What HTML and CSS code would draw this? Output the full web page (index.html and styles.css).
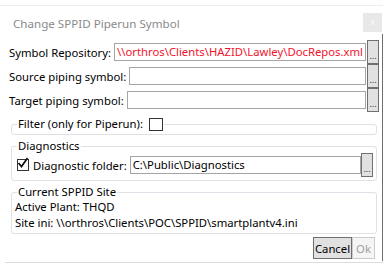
FILE: index.html
```html
<!DOCTYPE html>
<html lang="en">
<head>
    <meta charset="UTF-8">
    <title>Change SPPID Piperun Symbol</title>
    <link rel="stylesheet" href="styles.css">
</head>
<body>
    <div class="dialog">
        <div class="titlebar">
            <span class="title">Change SPPID Piperun Symbol</span>
            <span class="close">x</span>
        </div>

        <div class="panel">
            <div class="row">
                <label>Symbol Repository:</label>
                <div class="field red">\\orthros\Clients\HAZID\Lawley\DocRepos.xml</div>
                <button class="browse">...</button>
            </div>
            <div class="row">
                <label>Source piping symbol:</label>
                <div class="field"></div>
                <button class="browse">...</button>
            </div>
            <div class="row">
                <label>Target piping symbol:</label>
                <div class="field"></div>
                <button class="browse">...</button>
            </div>

            <fieldset class="group filter">
                <legend>Filter (only for Piperun): <span class="check"></span></legend>
            </fieldset>

            <fieldset class="group diag">
                <legend>Diagnostics</legend>
                <div class="row inner">
                    <span class="check on">
                        <svg width="12" height="12" viewBox="0 0 12 12"><path d="M1.5 6 L4.5 9.5 L10.5 1" fill="none" stroke="#111" stroke-width="1.7"/></svg>
                    </span>
                    <label>Diagnostic folder:</label>
                    <div class="field">C:\Public\Diagnostics</div>
                    <button class="browse">...</button>
                </div>
            </fieldset>

            <fieldset class="group site">
                <legend>Current SPPID Site</legend>
                <div class="line">Active Plant: THQD</div>
                <div class="line">Site ini: \\orthros\Clients\POC\SPPID\smartplantv4.ini</div>
            </fieldset>

            <div class="actions">
                <button class="btn">Cancel</button>
                <button class="btn off">Ok</button>
            </div>
        </div>
        <div class="footline"></div>
    </div>
</body>
</html>
```

FILE: styles.css
```css
body {
    margin: 0;
    padding: 0;
    background: #fff;
    font-family: "Noto Sans", "Open Sans", sans-serif;
    font-size: 11.3px;
    color: #000;
}

.dialog {
    width: 383px;
    padding-top: 5px;
}

.titlebar {
    display: flex;
    align-items: flex-start;
    justify-content: space-between;
    height: 28px;
    border-top: 1px solid #eeeeee;
}

.title {
    margin: 9px 0 0 13px;
    font-family: "Noto Sans", sans-serif;
    font-size: 11.6px;
    line-height: 18px;
    color: #8a8a8a;
}

.close {
    width: 19px;
    height: 19px;
    margin: 7px 1px 0 0;
    background: #e8e8e8;
    color: #fafafa;
    font-size: 9px;
    line-height: 18px;
    text-align: center;
}

.panel {
    padding: 6px 3px 2px 0;
    border-right: 1px solid #6e6e6e;
}

.row {
    display: flex;
    align-items: center;
    height: 24px;
}

.row label {
    padding-left: 9px;
    margin-right: 3px;
    white-space: nowrap;
}

.field {
    flex: 1;
    min-width: 0;
    height: 16px;
    border: 1px solid #a5a5a5;
    padding-left: 2px;
    line-height: 16px;
    white-space: nowrap;
    overflow: hidden;
}

.field.red {
    color: #f0142d;
}

.browse {
    flex: none;
    width: 12px;
    height: 24px;
    padding: 0;
    margin: 0 0 0 1px;
    border: 1px solid #707070;
    background: #e1e1e1;
    font-family: inherit;
    font-size: 9px;
    line-height: 30px;
    color: #333;
    overflow: hidden;
}

.group {
    margin: 0 2px 0 11px;
    padding: 0 3px;
    border: 1px solid #dce2e8;
    border-radius: 3px;
}

.group legend {
    display: flex;
    align-items: center;
    margin-left: 2px;
    padding: 0 1px;
    line-height: 14px;
}

.filter {
    margin-top: 5px;
    padding-bottom: 3px;
}

.filter .check {
    width: 12px;
    margin-left: 6px;
}

.diag {
    margin-top: 4px;
    padding-bottom: 3px;
}

.row.inner label {
    padding-left: 4px;
}

.row.inner .browse {
    margin-left: 0;
}

.check {
    display: inline-block;
    width: 11px;
    height: 11px;
    border: 1px solid #333;
    background: #fff;
}

.check.on {
    position: relative;
    width: 10px;
    height: 10px;
    margin-left: 2px;
}

.check svg {
    position: absolute;
    left: -1px;
    top: -3px;
}

.site {
    margin-top: 4px;
    padding-bottom: 2px;
}

.line {
    line-height: 16px;
}

.actions {
    display: flex;
    justify-content: flex-end;
    margin: 3px 4px 0 0;
}

.btn {
    height: 22px;
    padding: 0;
    margin: 0;
    border: 1px solid #adadad;
    background: #fff;
    font-family: inherit;
    font-size: 11.3px;
    color: #000;
}

.btn:first-child {
    width: 39px;
    border-color: #707070;
    background: #e1e1e1;
}

.btn.off {
    width: 23px;
    border-color: #cccccc;
    color: #a0a0a0;
    background: #f5f5f5;
}

.footline {
    height: 1px;
    margin: 1px 0 0 5px;
    background: #dddddd;
}
```
